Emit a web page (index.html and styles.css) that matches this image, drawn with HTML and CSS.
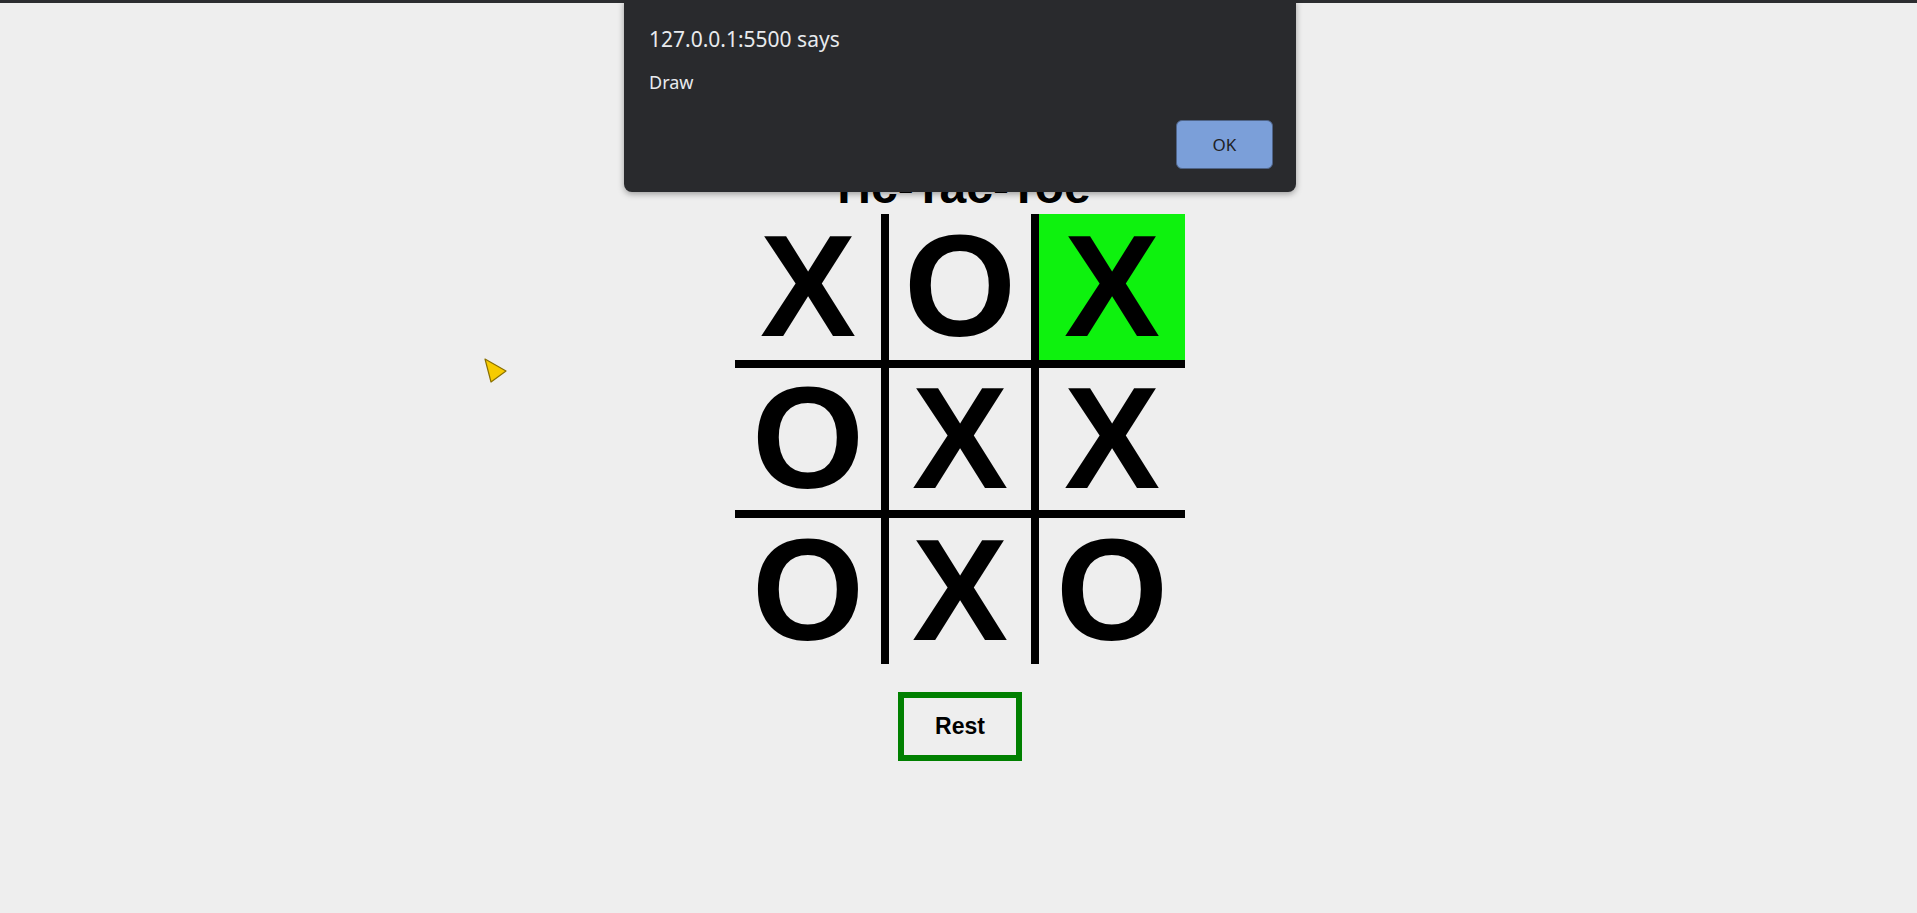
FILE: index.html
```html
<!DOCTYPE html>
<html lang="en">
<head>
<meta charset="utf-8">
<title>Tic-Tac-Toe</title>
<link rel="stylesheet" href="styles.css">
</head>
<body>
<div class="topline"></div>
<main class="page">
  <h1 class="title">Tic-Tac-Toe</h1>
  <div class="board">
    <div class="cell c-r c-b">X</div>
    <div class="cell c-l c-r c-b">O</div>
    <div class="cell c-l c-b win">X</div>
    <div class="cell c-r c-t c-b">O</div>
    <div class="cell c-l c-r c-t c-b">X</div>
    <div class="cell c-l c-t c-b">X</div>
    <div class="cell c-r c-t">O</div>
    <div class="cell c-l c-r c-t">X</div>
    <div class="cell c-l c-t">O</div>
  </div>
  <button class="reset">Rest</button>
</main>

<svg class="cursor" width="26" height="28" viewBox="0 0 26 28">
  <polygon points="2,2 23,14 8,25" fill="#f7cb00" stroke="#8a7000" stroke-width="1.2" stroke-linejoin="round"/>
</svg>

<div class="dialog">
  <div class="dialog-title">127.0.0.1:5500 says</div>
  <div class="dialog-msg">Draw</div>
  <div class="dialog-actions">
    <button class="dialog-ok">OK</button>
  </div>
</div>
</body>
</html>
```

FILE: styles.css
```css
html, body {
  margin: 0;
  padding: 0;
}

body {
  background: #eeeeee;
  font-family: "Liberation Sans", Arial, sans-serif;
  min-height: 913px;
}

.topline {
  height: 3px;
  background: #2c2d30;
}

.page {
  display: flex;
  flex-direction: column;
  align-items: center;
  padding-left: 3px;
}

.title {
  margin: 156px 0 0;
  font-size: 48px;
  font-weight: bold;
  line-height: 55px;
  color: #000;
}

.board {
  display: grid;
  grid-template-columns: repeat(3, 150px);
  grid-template-rows: repeat(3, 150px);
}

.cell {
  box-sizing: border-box;
  display: flex;
  align-items: center;
  justify-content: center;
  font-size: 144px;
  font-weight: bold;
  color: #000;
  border: 0 solid #000;
}

.c-l { border-left-width: 4px; }
.c-r { border-right-width: 4px; }
.c-t { border-top-width: 4px; }
.c-b { border-bottom-width: 4px; }

.win {
  background: #0ef20e;
}

.reset {
  margin-top: 28px;
  box-sizing: border-box;
  width: 124px;
  height: 69px;
  border: 6px solid #008000;
  background: transparent;
  font-family: "Liberation Sans", Arial, sans-serif;
  font-weight: bold;
  font-size: 23px;
  color: #000;
  padding: 0;
}

.cursor {
  position: absolute;
  left: 483px;
  top: 357px;
}

.dialog {
  position: absolute;
  top: 0;
  left: 624px;
  width: 672px;
  height: 192px;
  box-sizing: border-box;
  padding: 25px 23px 23px 25px;
  background: #292a2d;
  border-radius: 0 0 8px 8px;
  box-shadow: 0 2px 6px rgba(0, 0, 0, 0.35);
  display: flex;
  flex-direction: column;
  font-family: "Noto Sans", "Open Sans", sans-serif;
  color: #e8eaed;
}

.dialog-title {
  font-size: 21px;
  line-height: 28px;
}

.dialog-msg {
  margin-top: 17px;
  font-size: 18px;
  line-height: 24px;
}

.dialog-actions {
  margin-top: auto;
  display: flex;
  justify-content: flex-end;
}

.dialog-ok {
  box-sizing: border-box;
  width: 97px;
  height: 49px;
  background: #7b9fd9;
  border: 1px solid #4f6488;
  border-radius: 6px;
  font-family: "Noto Sans", "Open Sans", sans-serif;
  font-size: 17px;
  color: #202124;
  padding: 0;
}
```
